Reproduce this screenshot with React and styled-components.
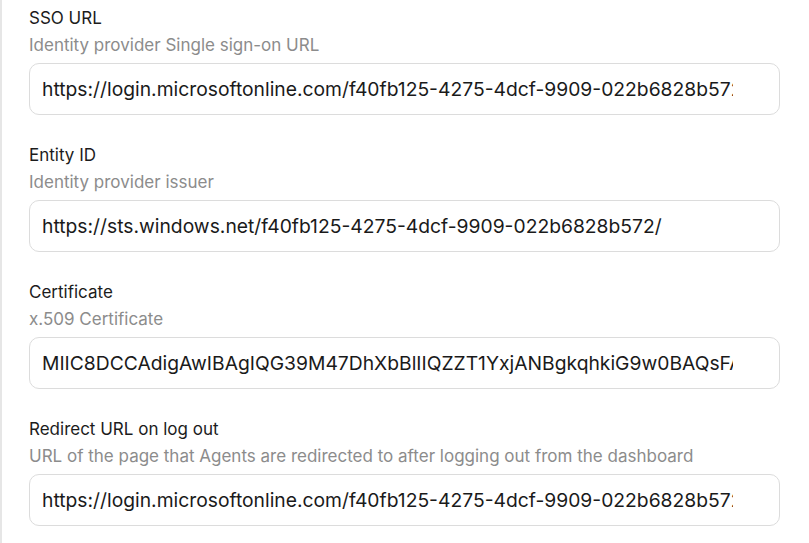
import React from 'react';
import styled, { createGlobalStyle } from 'styled-components';

const GlobalStyle = createGlobalStyle`
  html, body {
    margin: 0;
    padding: 0;
    background: #ffffff;
  }
  body {
    font-family: Inter, "Noto Sans", sans-serif;
    color: #1f1f1f;
  }
`;

const Page = styled.div`
  width: 809px;
  height: 543px;
  box-sizing: border-box;
  border-left: 2px solid #e6e6e6;
  padding: 7px 29px 0 27px;
  overflow: hidden;
`;

const Field = styled.div`
  display: flex;
  flex-direction: column;
  margin-bottom: 29px;
`;

const Label = styled.div`
  font-size: 17px;
  line-height: 22px;
  color: #1c1c1c;
`;

const Hint = styled.div`
  font-size: 17px;
  line-height: 22px;
  margin-top: 5px;
  color: #8c8c8c;
`;

const Input = styled.input`
  margin-top: 7px;
  box-sizing: border-box;
  width: 100%;
  height: 52px;
  padding: 0 46px 0 12px;
  border: 1px solid #dcdcdc;
  border-radius: 10px;
  font-family: Inter, "Noto Sans", sans-serif;
  font-size: 19.3px;
  color: #1a1a1a;
  background: #fff;
  outline: none;
`;

const fields = [
  {
    label: 'SSO URL',
    hint: 'Identity provider Single sign-on URL',
    value: 'https://login.microsoftonline.com/f40fb125-4275-4dcf-9909-022b6828b572/saml2',
  },
  {
    label: 'Entity ID',
    hint: 'Identity provider issuer',
    value: 'https://sts.windows.net/f40fb125-4275-4dcf-9909-022b6828b572/',
  },
  {
    label: 'Certificate',
    hint: 'x.509 Certificate',
    value: 'MIIC8DCCAdigAwIBAgIQG39M47DhXbBlIIQZZT1YxjANBgkqhkiG9w0BAQsFADA0MTIwMAYDVQQD',
  },
  {
    label: 'Redirect URL on log out',
    hint: 'URL of the page that Agents are redirected to after logging out from the dashboard',
    value: 'https://login.microsoftonline.com/f40fb125-4275-4dcf-9909-022b6828b572/saml2',
  },
];

export default function App() {
  return (
    <>
      <GlobalStyle />
      <Page>
        {fields.map((f) => (
          <Field key={f.label}>
            <Label>{f.label}</Label>
            <Hint>{f.hint}</Hint>
            <Input type="text" defaultValue={f.value} readOnly />
          </Field>
        ))}
      </Page>
    </>
  );
}
